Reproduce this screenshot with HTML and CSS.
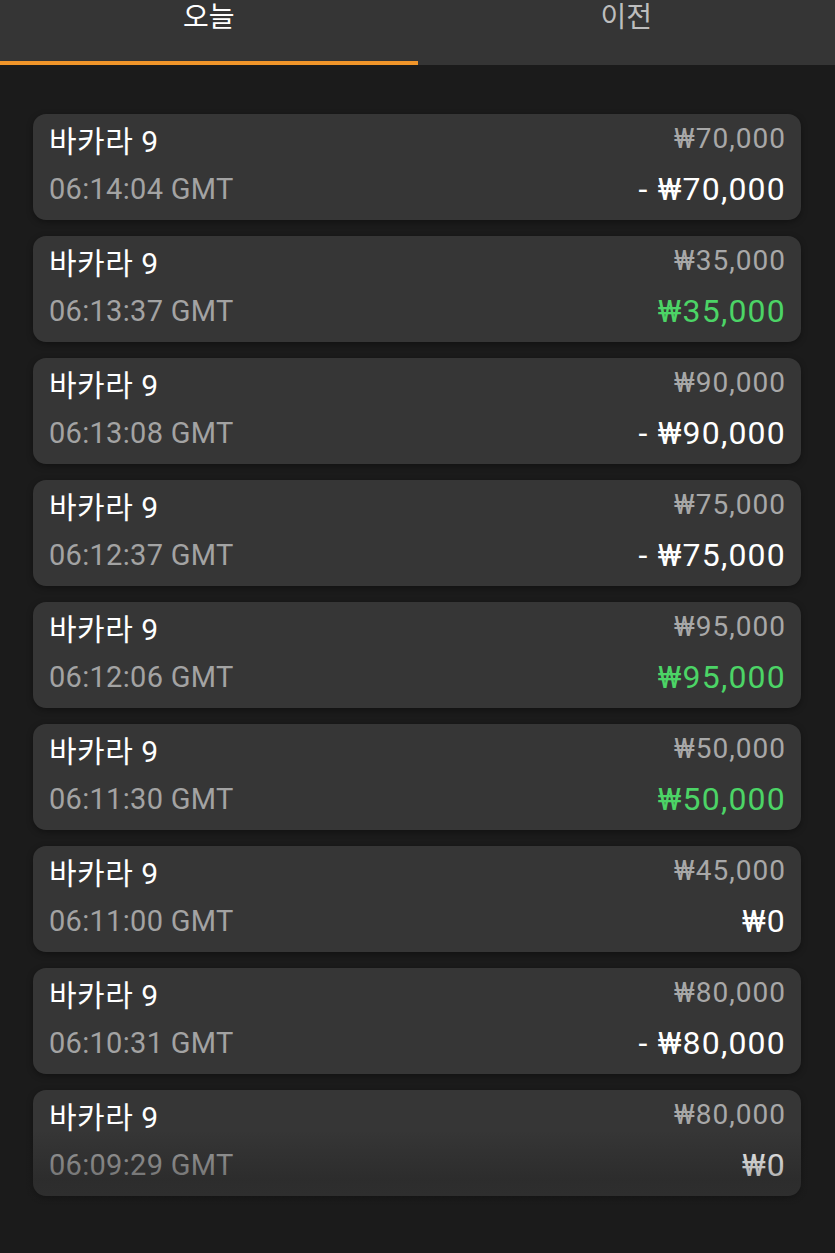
FILE: index.html
```html
<!DOCTYPE html>
<html lang="ko">
<head>
    <meta charset="UTF-8">
    <meta name="viewport" content="width=device-width, initial-scale=1.0">
    <title>베팅 내역</title>
    <link rel="stylesheet" href="styles.css">
</head>
<body>

<!-- Tabs -->
<div class="tabs">
    <div class="tab active">오늘</div>
    <div class="tab">이전</div>
</div>

<!-- History list -->
<div class="list">
    <div class="card">
        <div class="row"><span class="game">바카라 9</span><span class="bet">₩70,000</span></div>
        <div class="row"><span class="time">06:14:04 GMT</span><span class="result">- ₩70,000</span></div>
    </div>
    <div class="card">
        <div class="row"><span class="game">바카라 9</span><span class="bet">₩35,000</span></div>
        <div class="row"><span class="time">06:13:37 GMT</span><span class="result win">₩35,000</span></div>
    </div>
    <div class="card">
        <div class="row"><span class="game">바카라 9</span><span class="bet">₩90,000</span></div>
        <div class="row"><span class="time">06:13:08 GMT</span><span class="result">- ₩90,000</span></div>
    </div>
    <div class="card">
        <div class="row"><span class="game">바카라 9</span><span class="bet">₩75,000</span></div>
        <div class="row"><span class="time">06:12:37 GMT</span><span class="result">- ₩75,000</span></div>
    </div>
    <div class="card">
        <div class="row"><span class="game">바카라 9</span><span class="bet">₩95,000</span></div>
        <div class="row"><span class="time">06:12:06 GMT</span><span class="result win">₩95,000</span></div>
    </div>
    <div class="card">
        <div class="row"><span class="game">바카라 9</span><span class="bet">₩50,000</span></div>
        <div class="row"><span class="time">06:11:30 GMT</span><span class="result win">₩50,000</span></div>
    </div>
    <div class="card">
        <div class="row"><span class="game">바카라 9</span><span class="bet">₩45,000</span></div>
        <div class="row"><span class="time">06:11:00 GMT</span><span class="result">₩0</span></div>
    </div>
    <div class="card">
        <div class="row"><span class="game">바카라 9</span><span class="bet">₩80,000</span></div>
        <div class="row"><span class="time">06:10:31 GMT</span><span class="result">- ₩80,000</span></div>
    </div>
    <div class="card">
        <div class="row"><span class="game">바카라 9</span><span class="bet">₩80,000</span></div>
        <div class="row"><span class="time">06:09:29 GMT</span><span class="result">₩0</span></div>
    </div>
</div>

<div class="fade"></div>

</body>
</html>
```

FILE: styles.css
```css
body {
    margin: 0;
    background-color: #1b1b1b;
    font-family: Roboto, "Noto Sans CJK KR", sans-serif;
    color: #fff;
    min-height: 1253px;
}

.tabs {
    display: flex;
    background-color: #353535;
    height: 65px;
}

.tab {
    flex: 1;
    text-align: center;
    font-size: 28px;
    line-height: 36px;
    color: #bdbdbd;
    box-sizing: border-box;
    border-bottom: 4px solid transparent;
}

.tab.active {
    color: #fff;
    border-bottom-color: #f0952a;
}

.list {
    display: flex;
    flex-direction: column;
    gap: 16px;
    padding: 49px 34px 40px 33px;
}

.card {
    background-color: #363636;
    border-radius: 13px;
    height: 106px;
    box-sizing: border-box;
    padding: 0 15px 0 16px;
    box-shadow: 0 2px 6px rgba(0, 0, 0, 0.35);
}

.row {
    display: flex;
    justify-content: space-between;
    align-items: center;
    height: 49px;
}

.row + .row {
    height: 52px;
}

.game {
    font-size: 30px;
    letter-spacing: 0.5px;
    color: #fff;
}

.time {
    font-size: 29px;
    letter-spacing: 0.3px;
    color: #a3a3a3;
}

.bet {
    font-size: 28px;
    letter-spacing: 1px;
    color: #a8a8a8;
}

.result {
    font-size: 32px;
    letter-spacing: 1.2px;
    color: #fff;
}

.result.win {
    color: #4cd466;
}

.fade {
    position: absolute;
    left: 0;
    right: 0;
    top: 1130px;
    height: 123px;
    background: linear-gradient(to bottom, rgba(27, 27, 27, 0), rgba(27, 27, 27, 0.35) 40%, rgba(27, 27, 27, 0.1));
    pointer-events: none;
}
```
